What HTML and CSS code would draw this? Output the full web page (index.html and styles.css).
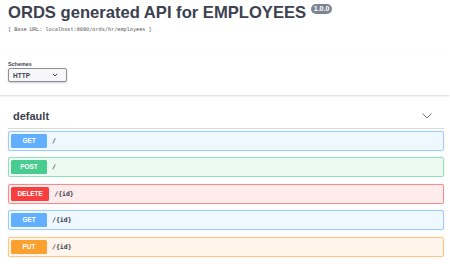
FILE: index.html
```html
<!DOCTYPE html>
<html lang="en">
<head>
  <meta charset="UTF-8" />
  <title>ORDS generated API for EMPLOYEES</title>
  <link rel="stylesheet" href="styles.css">
</head>
<body>
  <div class="info">
    <h2 class="title">ORDS generated API for EMPLOYEES <span class="version">1.0.0</span></h2>
    <pre class="base-url">[ Base URL: localhost:8080/ords/hr/employees ]</pre>
  </div>

  <div class="scheme-container">
    <label class="schemes-label">Schemes</label>
    <div class="select">
      <span>HTTP</span>
      <svg width="6" height="4" viewBox="0 0 6 4"><path d="M0.8 0.8 L3 3 L5.2 0.8" fill="none" stroke="#3b4151" stroke-width="1"/></svg>
    </div>
  </div>

  <div class="tag-section">
    <h3 class="tag">
      <span>default</span>
      <svg width="10" height="6" viewBox="0 0 10 6"><path d="M0.5 0.5 L5 5 L9.5 0.5" fill="none" stroke="#555" stroke-width="0.8"/></svg>
    </h3>

    <div class="opblock get">
      <span class="method">GET</span>
      <span class="path">/</span>
    </div>
    <div class="opblock post">
      <span class="method">POST</span>
      <span class="path">/</span>
    </div>
    <div class="opblock delete">
      <span class="method">DELETE</span>
      <span class="path">/{id}</span>
    </div>
    <div class="opblock get">
      <span class="method">GET</span>
      <span class="path">/{id}</span>
    </div>
    <div class="opblock put">
      <span class="method">PUT</span>
      <span class="path">/{id}</span>
    </div>
  </div>
</body>
</html>
```

FILE: styles.css
```css
body {
  margin: 0;
  font-family: 'Liberation Sans', Arial, sans-serif;
  background: #fff;
  color: #3b4151;
}
.info {
  padding: 3px 6px 0 8px;
  height: 46px;
}
.title {
  margin: 0;
  font-size: 16.6px;
  line-height: 20px;
  font-weight: bold;
  color: #3b4151;
}
.version {
  display: inline-block;
  position: relative;
  top: -5px;
  margin-left: 0;
  padding: 0 3px;
  height: 10px;
  line-height: 10px;
  font-size: 7px;
  font-weight: bold;
  color: #fff;
  background: #7d8492;
  border-radius: 6px;
  vertical-align: middle;
}
.base-url {
  margin: 2px 0 0;
  font-family: 'DejaVu Sans Mono', monospace;
  font-size: 5.2px;
  line-height: 8px;
  color: #555;
}
.scheme-container {
  padding: 12px 8px 13px;
  box-shadow: 0 1px 2px 0 rgba(0, 0, 0, 0.15);
  margin-bottom: 9px;
}
.schemes-label {
  display: block;
  font-size: 5.4px;
  font-weight: bold;
  line-height: 6px;
  margin-bottom: 1px;
}
.select {
  display: flex;
  align-items: center;
  justify-content: space-between;
  box-sizing: border-box;
  width: 59px;
  height: 14px;
  padding: 0 8px 0 4px;
  border: 1px solid #8b8e96;
  border-radius: 2px;
  background: #f7f7f7;
  box-shadow: 0 1px 2px 0 rgba(0, 0, 0, 0.2);
  font-size: 6.5px;
  font-weight: bold;
}
.tag-section {
  padding: 0 6px 0 8px;
}
.tag {
  display: flex;
  align-items: center;
  justify-content: space-between;
  margin: 0 0 2px;
  padding: 5px 12px 5px 5px;
  height: 14px;
  font-size: 11px;
  font-weight: bold;
  border-bottom: 1px solid rgba(59, 65, 81, 0.2);
}
.opblock {
  display: flex;
  align-items: center;
  box-sizing: border-box;
  height: 20px;
  padding: 0 2px;
  margin-bottom: 6.4px;
  border: 1px solid;
  border-radius: 2px;
  box-shadow: 0 0 2px rgba(0, 0, 0, 0.1);
}
.method {
  box-sizing: border-box;
  min-width: 36px;
  height: 14px;
  line-height: 14px;
  padding: 0 6.5px;
  border-radius: 1.5px;
  text-align: center;
  color: #fff;
  font-size: 6.4px;
  font-weight: bold;
}
.path {
  padding: 0 5px;
  font-family: 'DejaVu Sans Mono', monospace;
  font-size: 6.5px;
  font-weight: bold;
  color: #3b4151;
}
.get { background: #eff7ff; border-color: #9ccdfe; }
.get .method { background: #61affe; }
.post { background: #edfaf4; border-color: #92e0bc; }
.post .method { background: #49cc90; }
.delete { background: #feebeb; border-color: #fb8b8b; }
.delete .method { background: #f93e3e; }
.put { background: #fff5ea; border-color: #fdc683; }
.put .method { background: #fca130; }
```
